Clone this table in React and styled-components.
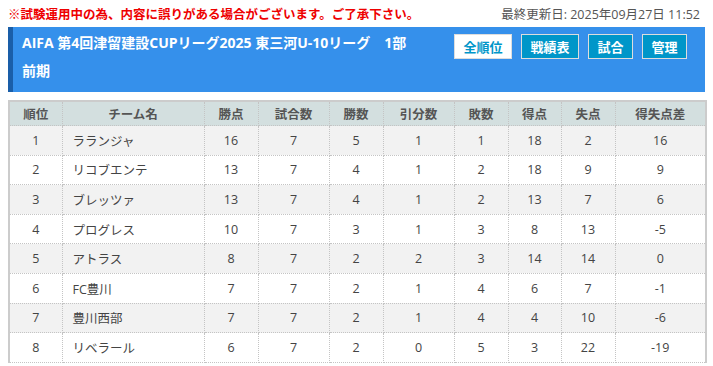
import React from 'react'
import styled, { createGlobalStyle } from 'styled-components'

const GlobalStyle = createGlobalStyle`
    body {
        margin: 0;
        background: #fff;
        font-family: "Open Sans", "Noto Sans CJK JP", sans-serif;
        color: #333;
    }
`

const Page = styled.div`
    padding: 0 8px;
    width: 697px;
`

const TopBar = styled.div`
    display: flex;
    justify-content: space-between;
    align-items: center;
    height: 27px;
`

const Notice = styled.span`
    color: #ee0000;
    font-size: 12.5px;
    font-weight: bold;
`

const Updated = styled.span`
    color: #555;
    font-size: 12.5px;
    margin-right: 5px;
`

const Header = styled.div`
    display: flex;
    justify-content: space-between;
    height: 65px;
    box-sizing: border-box;
    background: #3590eb;
    border-left: 5px solid #1a5ea8;
    padding: 2px 18px 0 9px;
`

const Title = styled.h1`
    margin: 0;
    color: #fff;
    font-size: 14px;
    font-weight: bold;
    line-height: 28px;
`

const Nav = styled.div`
    display: flex;
    gap: 9px;
    margin-top: 5px;
    align-self: flex-start;
`

const NavButton = styled.div`
    width: ${p => p.w}px;
    height: 25px;
    box-sizing: border-box;
    border: 1px solid #dddddd;
    background: ${p => (p.active ? '#fff' : '#0096c9')};
    color: ${p => (p.active ? '#0096c9' : '#fff')};
    font-size: 13px;
    font-weight: bold;
    display: flex;
    align-items: center;
    justify-content: center;
`

const Table = styled.table`
    margin-top: 8px;
    width: 697px;
    border-collapse: collapse;
    table-layout: fixed;
    border-left: 2px solid #cccccc;
    border-right: 2px solid #cccccc;
    border-top: 2px solid #cccccc;
    font-size: 12.5px;
`

const Th = styled.th`
    height: 23px;
    padding: 0;
    background: #d3dfdf;
    color: #555;
    font-weight: bold;
    border: 1px dotted #c4c4c4;
`

const Row = styled.tr`
    height: 29.6px;
    background: ${p => (p.odd ? '#f2f2f2' : '#fff')};
`

const Td = styled.td`
    padding: 0 ${p => (p.left ? '10px' : '0')};
    text-align: ${p => (p.left ? 'left' : 'center')};
    color: #444;
    border: 1px dotted #c4c4c4;
`

const columns = [
    ['順位', 53],
    ['チーム名', 142],
    ['勝点', 54],
    ['試合数', 71],
    ['勝数', 54],
    ['引分数', 71],
    ['敗数', 54],
    ['得点', 53],
    ['失点', 54],
    ['得失点差', 91]
]

const rows = [
    [1, 'ラランジャ', 16, 7, 5, 1, 1, 18, 2, 16],
    [2, 'リコブエンテ', 13, 7, 4, 1, 2, 18, 9, 9],
    [3, 'ブレッツァ', 13, 7, 4, 1, 2, 13, 7, 6],
    [4, 'プログレス', 10, 7, 3, 1, 3, 8, 13, -5],
    [5, 'アトラス', 8, 7, 2, 2, 3, 14, 14, 0],
    [6, 'FC豊川', 7, 7, 2, 1, 4, 6, 7, -1],
    [7, '豊川西部', 7, 7, 2, 1, 4, 4, 10, -6],
    [8, 'リベラール', 6, 7, 2, 0, 5, 3, 22, -19]
]

const navItems = [
    ['全順位', 58, true],
    ['戦績表', 58],
    ['試合', 45],
    ['管理', 45]
]

export default function App() {
    return (
        <Page>
            <GlobalStyle />
            <TopBar>
                <Notice>※試験運用中の為、内容に誤りがある場合がございます。ご了承下さい。</Notice>
                <Updated>最終更新日: 2025年09月27日 11:52</Updated>
            </TopBar>
            <Header>
                <Title>
                    AIFA 第4回津留建設CUPリーグ2025 東三河U-10リーグ　1部
                    <br />
                    前期
                </Title>
                <Nav>
                    {navItems.map(([label, w, active]) => (
                        <NavButton key={label} w={w} active={active}>{label}</NavButton>
                    ))}
                </Nav>
            </Header>
            <Table>
                <colgroup>
                    {columns.map(([name, w]) => <col key={name} style={{ width: w }} />)}
                </colgroup>
                <thead>
                    <tr>
                        {columns.map(([name]) => <Th key={name}>{name}</Th>)}
                    </tr>
                </thead>
                <tbody>
                    {rows.map((r, i) => (
                        <Row key={r[0]} odd={i % 2 === 0}>
                            {r.map((v, j) => (
                                <Td key={j} left={j === 1}>{v}</Td>
                            ))}
                        </Row>
                    ))}
                </tbody>
            </Table>
        </Page>
    )
}
